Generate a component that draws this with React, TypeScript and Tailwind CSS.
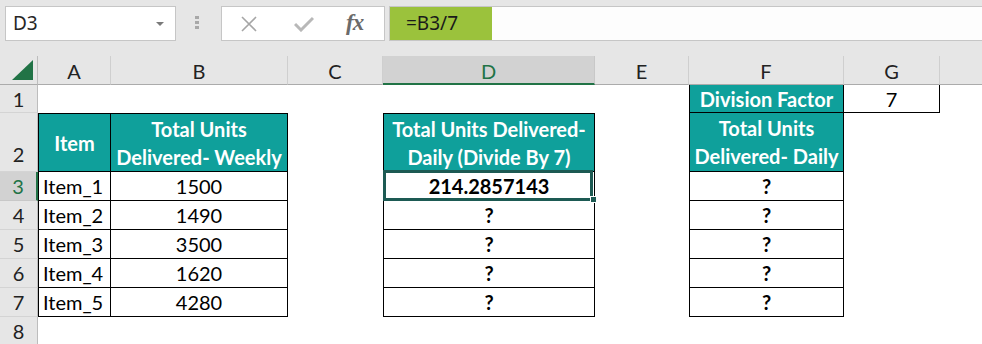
import React from "react";

type CellProps = { className?: string; children?: React.ReactNode };
const C = ({ className = "", children }: CellProps) => (
  <div className={"flex items-center min-w-0 overflow-visible whitespace-nowrap " + className}>{children}</div>
);

const RH = ({ n, sel = false, align = "center" }: { n: number; sel?: boolean; align?: string }) =>
  sel ? (
    <div className="flex items-center justify-center bg-[#d2d2d2] border-r-2 border-r-[#217346] border-b border-b-[#c8c8c8] text-[#217346] text-[20px]">
      {n}
    </div>
  ) : align === "end" ? (
    <div className="flex items-end justify-center pb-[2px] bg-[#e6e6e6] border-r border-r-[#bdbdbd] border-b border-b-[#d4d4d4] text-[#222] text-[20px]">
      {n}
    </div>
  ) : (
    <div className="flex items-center justify-center bg-[#e6e6e6] border-r border-r-[#bdbdbd] border-b border-b-[#d4d4d4] text-[#222] text-[20px]">
      {n}
    </div>
  );

const CH = ({ l, sel = false }: { l: string; sel?: boolean }) =>
  sel ? (
    <div className="flex items-center justify-center pt-[2px] bg-[#d2d2d2] border-r border-r-[#c8c8c8] border-b-2 border-b-[#217346] text-[#217346] text-[20px]">
      {l}
    </div>
  ) : (
    <div className="flex items-center justify-center pt-[2px] bg-[#e6e6e6] border-r border-r-[#cfcfcf] border-b border-b-[#ababab] text-[#222] text-[20px]">
      {l}
    </div>
  );

function TopBar() {
  return (
    <div className="h-[56px] bg-[#e6e6e6] flex items-start pt-[6px] [font-family:'Noto_Sans',sans-serif]">
      <div className="ml-[5px] w-[171px] h-[35px] bg-white border border-[#c6c6c6] flex items-center justify-between pl-[7px] pr-[11px]">
        <span className="text-[19px] text-[#262626]">D3</span>
        <span className="w-0 h-0 border-l-[4px] border-r-[4px] border-t-[4px] border-l-transparent border-r-transparent border-t-[#7a7a7a]" />
      </div>
      <div className="ml-[19px] mt-[10px] flex flex-col gap-[2px]">
        <span className="w-[4px] h-[3px] bg-[#a8a8a8]" />
        <span className="w-[4px] h-[3px] bg-[#a8a8a8]" />
        <span className="w-[4px] h-[3px] bg-[#a8a8a8]" />
      </div>
      <div className="ml-[22px] w-[164px] h-[35px] bg-white border border-[#c6c6c6] flex items-center">
        <svg className="ml-[18px]" width="18" height="16" viewBox="0 0 18 16">
          <path d="M2 1 L16 15 M16 1 L2 15" stroke="#a6a6a6" strokeWidth="1.6" fill="none" />
        </svg>
        <svg className="ml-[36px]" width="20" height="16" viewBox="0 0 20 16">
          <path d="M1 8 L7 14 L19 2" stroke="#b8b8b8" strokeWidth="3" fill="none" />
        </svg>
        <span className="ml-[32px] text-[23px] italic font-bold text-[#6b6b6b] [font-family:'Liberation_Serif',serif] tracking-[-1px]">fx</span>
      </div>
      <div className="ml-[4px] flex-1 h-[35px] bg-[#fdfdfd] border border-r-0 border-[#c6c6c6] flex items-stretch">
        <div className="w-[102px] bg-[#9bc23c] flex items-center pl-[16px]">
          <span className="text-[19px] text-[#1a1a1a]">=B3/7</span>
        </div>
      </div>
    </div>
  );
}

function Sheet() {
  const hdr = "bg-[#0fa09b] text-white font-bold justify-center text-center";
  const b = "border-black";
  return (
    <div className="grid grid-cols-[38px_73px_177px_95px_212px_94px_155px_96px_42px] grid-rows-[29px_28px_59px_29px_29px_29px_29px_29px_29px] [font-family:Lato,sans-serif] text-[20px] text-black">
      {/* column header row */}
      <div className="bg-[#e6e6e6] border-r border-r-[#bdbdbd] border-b border-b-[#ababab] flex items-end justify-end pr-[4px] pb-[4px]">
        <span className="w-0 h-0 border-l-[21px] border-t-[20px] border-l-transparent border-t-transparent border-b-0 border-r-0 relative">
          <span className="absolute block w-0 h-0 border-l-[21px] border-b-[20px] border-l-transparent border-b-[#217346] left-[-21px] top-[-20px]" />
        </span>
      </div>
      <CH l="A" />
      <CH l="B" />
      <CH l="C" />
      <CH l="D" sel />
      <CH l="E" />
      <CH l="F" />
      <CH l="G" />
      <div className="bg-[#e6e6e6] border-b border-b-[#ababab]" />

      {/* row 1 */}
      <RH n={1} />
      <C />
      <C />
      <C />
      <C />
      <C />
      <C className={hdr + " border-l border-b border-r " + b}>Division Factor</C>
      <C className={"justify-center border-b border-r " + b}>7</C>
      <C />

      {/* row 2 */}
      <RH n={2} align="end" />
      <C className={hdr + " border-l border-t border-r border-b " + b}>Item</C>
      <C className={hdr + " border-t border-r border-b leading-[28px] " + b}>
        <span>Total Units<br />Delivered- Weekly</span>
      </C>
      <C />
      <C className={hdr + " border-l border-t border-r border-b leading-[28px] " + b}>
        <span>Total Units Delivered-<br />Daily (Divide By 7)</span>
      </C>
      <C />
      <C className={hdr + " border-l border-r border-b leading-[28px] " + b}>
        <span>Total Units<br />Delivered- Daily</span>
      </C>
      <C />
      <C />

      {/* row 3 */}
      <RH n={3} sel />
      <C className={"pl-[4px] border-l border-r border-b " + b}>Item_1</C>
      <C className={"justify-center border-r border-b " + b}>1500</C>
      <C />
      <C className={"relative justify-center font-bold border-l border-r border-b " + b}>
        214.2857143
        <span className="absolute left-[-1px] top-[-2px] right-[1px] bottom-[-1px] border-[3px] border-[#1d5a53]" />
        <span className="absolute right-[-3px] bottom-[-3px] w-[7px] h-[7px] bg-[#1d5a53] border border-white" />
      </C>
      <C />
      <C className={"justify-center font-bold border-l border-r border-b " + b}>?</C>
      <C />
      <C />

      {/* row 4 */}
      <RH n={4} />
      <C className={"pl-[4px] border-l border-r border-b " + b}>Item_2</C>
      <C className={"justify-center border-r border-b " + b}>1490</C>
      <C />
      <C className={"justify-center font-bold border-l border-r border-b " + b}>?</C>
      <C />
      <C className={"justify-center font-bold border-l border-r border-b " + b}>?</C>
      <C />
      <C />

      {/* row 5 */}
      <RH n={5} />
      <C className={"pl-[4px] border-l border-r border-b " + b}>Item_3</C>
      <C className={"justify-center border-r border-b " + b}>3500</C>
      <C />
      <C className={"justify-center font-bold border-l border-r border-b " + b}>?</C>
      <C />
      <C className={"justify-center font-bold border-l border-r border-b " + b}>?</C>
      <C />
      <C />

      {/* row 6 */}
      <RH n={6} />
      <C className={"pl-[4px] border-l border-r border-b " + b}>Item_4</C>
      <C className={"justify-center border-r border-b " + b}>1620</C>
      <C />
      <C className={"justify-center font-bold border-l border-r border-b " + b}>?</C>
      <C />
      <C className={"justify-center font-bold border-l border-r border-b " + b}>?</C>
      <C />
      <C />

      {/* row 7 */}
      <RH n={7} />
      <C className={"pl-[4px] border-l border-r border-b " + b}>Item_5</C>
      <C className={"justify-center border-r border-b " + b}>4280</C>
      <C />
      <C className={"justify-center font-bold border-l border-r border-b " + b}>?</C>
      <C />
      <C className={"justify-center font-bold border-l border-r border-b " + b}>?</C>
      <C />
      <C />

      {/* row 8 */}
      <RH n={8} />
      <C />
      <C />
      <C />
      <C />
      <C />
      <C />
      <C />
      <C />
    </div>
  );
}

export default function App() {
  return (
    <div className="w-[982px] h-[344px] overflow-hidden bg-white">
      <TopBar />
      <Sheet />
    </div>
  );
}
